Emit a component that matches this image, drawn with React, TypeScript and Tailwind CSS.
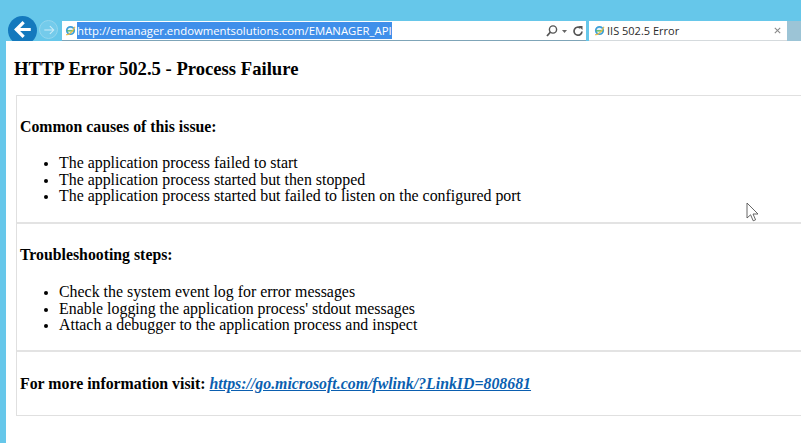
const IeIcon = ({ className }: { className: string }) => (
  <svg viewBox="0 0 16 16" className={className}>
    <circle cx="8" cy="8" r="5.4" fill="#e6f3f5" stroke="#3f9fd8" strokeWidth="2.6" />
    <path d="M3 8.5h10" stroke="#5cb85c" strokeWidth="2" />
    <path d="M1.5 14c3.5 1 9.5-3.5 13-11.5" fill="none" stroke="#e9bb45" strokeWidth="1.6" />
  </svg>
);

const Section = ({ title, items, listClass }: { title: string; items: string[]; listClass: string }) => (
  <section className="h-[128px] border-b-2 border-[#e3e3e3] pl-[3px] pt-[22px]">
    <h2 className="text-[15.8px] leading-[18px] font-bold">{title}</h2>
    <ul className={`${listClass} list-disc pl-[39px] text-[15.9px] leading-[16.5px] marker:text-[13px]`}>
      {items.map((t) => (
        <li key={t}>{t}</li>
      ))}
    </ul>
  </section>
);

export default function App() {
  return (
    <div className="relative flex h-[443px] w-[801px] flex-col overflow-hidden bg-[#66c7ea] font-['Liberation_Sans',sans-serif]">
      <header className="flex h-[41px] shrink-0 items-end">
        <div className="mb-[-4px] ml-[8px] flex h-[29px] w-[29px] shrink-0 items-center justify-center rounded-full bg-[#1479bd]">
          <svg viewBox="0 0 20 20" className="mb-[2px] h-[19px] w-[19px]" fill="none" stroke="#fff" strokeWidth="3.4" strokeLinecap="square">
            <path d="M17 10H4M10 3.5 3.5 10l6.5 6.5" />
          </svg>
        </div>
        <div className="mb-[2px] ml-[2px] flex h-[19px] w-[19px] shrink-0 items-center justify-center rounded-full border border-[#93d6ee] bg-[#74cbeb]">
          <svg viewBox="0 0 14 14" className="h-[12px] w-[12px]" fill="none" stroke="#cdeef9" strokeWidth="1.2">
            <path d="M1.5 7h11M8 2.5 12.5 7 8 11.5" />
          </svg>
        </div>
        <div className="ml-[4px] flex h-[20px] w-[524px] shrink-0 items-center border-b border-[#7fa5b8] bg-white pl-[3px]">
          <IeIcon className="h-[11px] w-[11px] shrink-0" />
          <span className="ml-[1px] bg-[#3f8fea] font-['Open_Sans',sans-serif] text-[11.35px] leading-[17px] text-white">
            http://emanager.endowmentsolutions.com/EMANAGER_API
          </span>
          <svg viewBox="0 0 44 14" className="ml-auto mr-[2px] h-[14px] w-[44px]" fill="none" stroke="#555" strokeWidth="1.4">
            <circle cx="13" cy="5.5" r="3.6" />
            <path d="M10.5 8 7 12" strokeWidth="1.8" />
            <path d="M22 6h5l-2.5 3z" fill="#666" stroke="none" />
            <path d="M40.5 4A4 4 0 1 0 42 7.5" strokeWidth="1.7" />
            <path d="M38.5 2h4v4z" fill="#555" stroke="none" />
          </svg>
        </div>
        <div className="ml-[3px] flex h-[20px] w-[198px] shrink-0 items-center border-b border-[#d5dadd] bg-white pl-[5px] pr-[5px]">
          <IeIcon className="h-[11px] w-[11px] shrink-0" />
          <span className="ml-[2px] pt-[1px] font-['Open_Sans',sans-serif] text-[11px] leading-[16px] text-[#2b2b2b]">IIS 502.5 Error</span>
          <svg viewBox="0 0 10 10" className="ml-auto h-[9px] w-[9px]" fill="none" stroke="#8a8a8a" strokeWidth="1.2">
            <path d="M2 2l6 6M8 2 2 8" />
          </svg>
        </div>
        <div className="h-[20px] flex-1 bg-[#9cc4d6]" />
      </header>
      <main className="ml-[6px] flex-1 bg-white pl-[8px] font-['Liberation_Serif',serif] text-black">
        <h1 className="mt-[17px] text-[18.65px] leading-[21px] font-bold">HTTP Error 502.5 - Process Failure</h1>
        <div className="mt-[16px] ml-[2px] h-[321px] border border-r-0 border-[#e0e0e0]">
          <Section
            title="Common causes of this issue:"
            listClass="mt-[19px]"
            items={[
              "The application process failed to start",
              "The application process started but then stopped",
              "The application process started but failed to listen on the configured port",
            ]}
          />
          <Section
            title="Troubleshooting steps:"
            listClass="mt-[20px]"
            items={[
              "Check the system event log for error messages",
              "Enable logging the application process' stdout messages",
              "Attach a debugger to the application process and inspect",
            ]}
          />
          <p className="pl-[3px] pt-[23px] text-[15.85px] leading-[18px] font-bold">
            For more information visit:{" "}
            <a href="#" className="text-[#0b5fb0] italic underline">
              https://go.microsoft.com/fwlink/?LinkID=808681
            </a>
          </p>
        </div>
      </main>
      <svg viewBox="0 0 14 22" className="absolute left-[746px] top-[202px] h-[22px] w-[14px]" fill="#fff" stroke="#555" strokeWidth="0.9">
        <path d="M1 1v15l3.6-3.2 2.6 6 2.4-1-2.6-5.8H12z" />
      </svg>
    </div>
  );
}
